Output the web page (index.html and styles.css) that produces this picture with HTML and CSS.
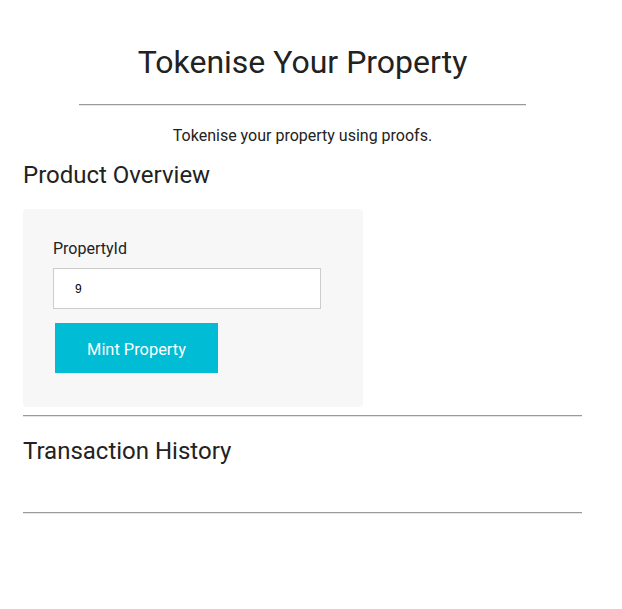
FILE: index.html
```html
<!DOCTYPE html>
<html lang="en">
<head>
<meta charset="utf-8">
<title>Tokenise Your Property</title>
<link rel="stylesheet" href="styles.css">
</head>
<body>
<main class="page">
  <h1 class="title">Tokenise Your Property</h1>
  <hr class="rule rule-short">
  <p class="subtitle">Tokenise your property using proofs.</p>
  <h2 class="section-title">Product Overview</h2>
  <div class="card">
    <label class="field-label" for="propertyId">PropertyId</label>
    <input class="field-input" id="propertyId" type="text" value="9">
    <button class="mint-btn" type="button">Mint Property</button>
  </div>
  <hr class="rule rule-after-card">
  <h2 class="section-title history-title">Transaction History</h2>
  <hr class="rule rule-bottom">
</main>
</body>
</html>
```
FILE: styles.css
```css
html, body {
  margin: 0;
  padding: 0;
  background: #fff;
}

body {
  font-family: Roboto, "Noto Sans", Arial, sans-serif;
  color: #222;
}

.page {
  width: 559px;
  margin-left: 23px;
  display: flex;
  flex-direction: column;
}

.title {
  margin: 42px 0 0;
  font-size: 32px;
  line-height: 40px;
  font-weight: 400;
  text-align: center;
}

.rule {
  margin: 0;
  border: 0;
  border-top: 1px solid #9a9a9a;
  border-bottom: 1px solid #e6e6e6;
  height: 0;
  width: 100%;
}

.rule-short {
  width: 80%;
  align-self: center;
  margin-top: 22px;
}

.subtitle {
  margin: 20px 0 0;
  font-size: 16px;
  line-height: 20px;
  text-align: center;
}

.section-title {
  margin: 15px 0 0;
  font-size: 24px;
  line-height: 28px;
  font-weight: 400;
}

.card {
  margin-top: 20px;
  width: 340px;
  box-sizing: border-box;
  padding: 30px 30px 34px;
  background: #f7f7f7;
  border-radius: 4px;
  display: flex;
  flex-direction: column;
  align-items: flex-start;
}

.field-label {
  font-size: 16px;
  line-height: 20px;
}

.field-input {
  margin-top: 9px;
  width: 268px;
  height: 41px;
  box-sizing: border-box;
  border: 1px solid #cccccc;
  background: #fff;
  padding: 0 0 0 21px;
  font-family: "Liberation Sans", Arial, sans-serif;
  font-size: 12px;
  color: #000;
  outline: none;
}

.mint-btn {
  margin: 14px 0 0 2px;
  width: 163px;
  height: 50px;
  box-sizing: border-box;
  padding: 3px 0 0;
  border: 0;
  background: #00bcd4;
  color: #fff;
  font-family: Roboto, Arial, sans-serif;
  font-size: 16.4px;
  cursor: pointer;
}

.rule-after-card {
  margin-top: 8px;
}

.history-title {
  margin-top: 20px;
}

.rule-bottom {
  margin-top: 47px;
}
```
